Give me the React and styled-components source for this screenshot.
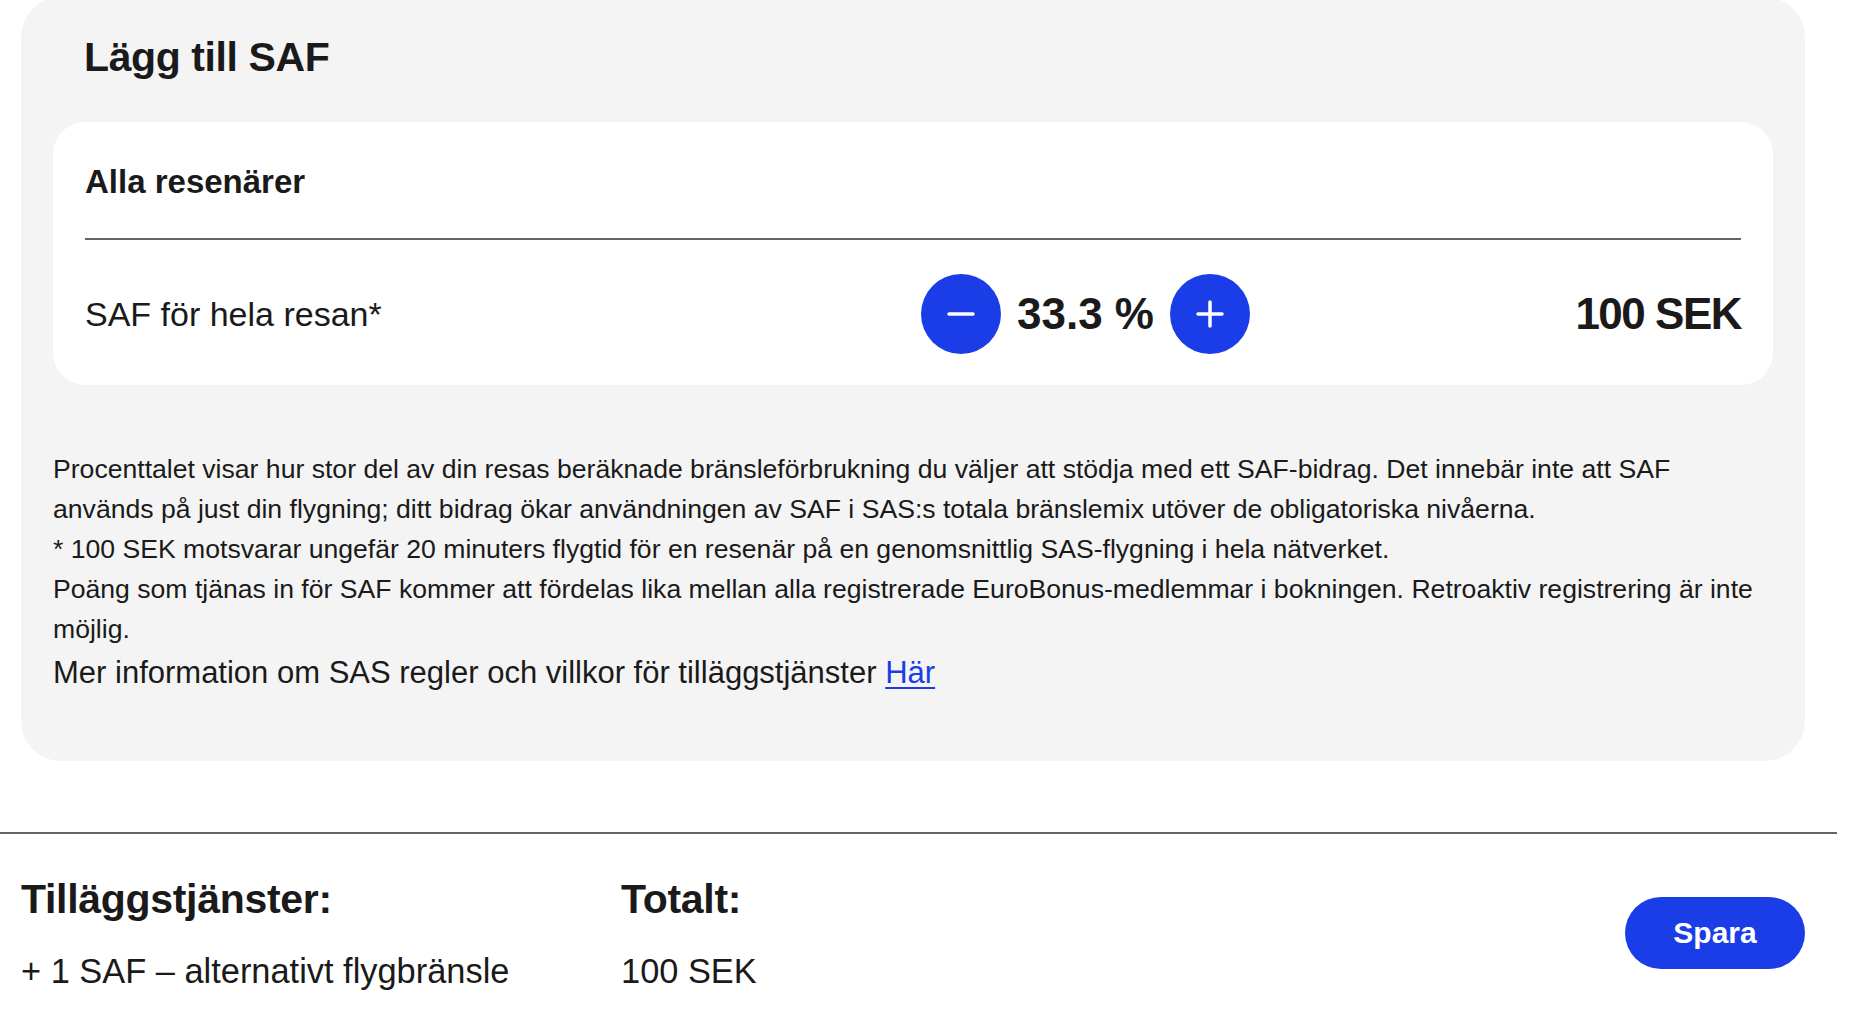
import React, { useState } from "react";
import styled, { createGlobalStyle } from "styled-components";

const GlobalStyle = createGlobalStyle`
  html, body {
    margin: 0;
    padding: 0;
    background: #ffffff;
    color: #1a1a1a;
    font-family: "Liberation Sans", Arial, sans-serif;
    overflow: hidden;
  }
  * { box-sizing: border-box; }
`;

const BLUE = "#1a3de8";

const Page = styled.div`
  width: 1862px;
  height: 1032px;
  overflow: hidden;
`;

const Panel = styled.section`
  margin: -3px 57px 0 21px;
  padding: 36px 32px 68px;
  background: #f4f4f4;
  border-radius: 40px;
`;

const Title = styled.h2`
  margin: 0 0 41px;
  padding-left: 31px;
  font-size: 41px;
  line-height: 48px;
  font-weight: 700;
  letter-spacing: -0.4px;
`;

const Card = styled.div`
  background: #ffffff;
  border-radius: 32px;
  padding: 40px 32px 31px;
`;

const CardHeader = styled.h3`
  margin: 0;
  padding-bottom: 36px;
  border-bottom: 2px solid #646464;
  font-size: 33px;
  line-height: 40px;
  font-weight: 700;
`;

const Row = styled.div`
  display: grid;
  grid-template-columns: 1fr 1fr;
  gap: 16px;
  align-items: center;
  margin-top: 34px;
`;

const Label = styled.span`
  font-size: 34px;
  line-height: 40px;
`;

const RightCell = styled.div`
  display: flex;
  align-items: center;
  justify-content: space-between;
`;

const Stepper = styled.div`
  display: flex;
  align-items: center;
  gap: 16px;
`;

const RoundButton = styled.button`
  width: 80px;
  height: 80px;
  border-radius: 50%;
  border: none;
  padding: 0;
  background: ${BLUE};
  display: flex;
  align-items: center;
  justify-content: center;
  cursor: pointer;
`;

const BigValue = styled.span`
  font-size: 44px;
  line-height: 48px;
  font-weight: 700;
  letter-spacing: ${(p) => (p.$tight ? "-1.5px" : "0")};
`;

const Info = styled.div`
  margin-top: 64px;
`;

const Paragraph = styled.p`
  margin: 0;
  font-size: 26.6px;
  line-height: 40px;
`;

const MoreInfo = styled.p`
  margin: 4px 0 0;
  font-size: 31px;
  line-height: 40px;
`;

const Link = styled.a`
  color: ${BLUE};
  text-decoration: underline;
  text-underline-offset: 4px;
  text-decoration-thickness: 2px;
`;

const Footer = styled.footer`
  margin: 71px 25px 0 0;
  border-top: 2px solid #646464;
  padding: 41px 32px 0 21px;
  display: flex;
  align-items: center;
`;

const Column = styled.div`
  width: ${(p) => p.$width || "auto"};
  display: flex;
  flex-direction: column;
  gap: 28px;
`;

const ColumnTitle = styled.h4`
  margin: 0;
  font-size: 41px;
  line-height: 48px;
  font-weight: 700;
  letter-spacing: -0.3px;
`;

const ColumnText = styled.span`
  font-size: 34.4px;
  line-height: 40px;
`;

const SaveButton = styled.button`
  margin-left: auto;
  width: 180px;
  height: 72px;
  border: none;
  border-radius: 36px;
  background: ${BLUE};
  color: #ffffff;
  font-family: "Liberation Sans", Arial, sans-serif;
  font-size: 30px;
  font-weight: 700;
  cursor: pointer;
`;

const Minus = () => (
  <svg width="30" height="30" viewBox="0 0 30 30">
    <line x1="3" y1="15" x2="27" y2="15" stroke="#fff" strokeWidth="3.5" strokeLinecap="round" />
  </svg>
);

const Plus = () => (
  <svg width="30" height="30" viewBox="0 0 30 30">
    <line x1="3" y1="15" x2="27" y2="15" stroke="#fff" strokeWidth="3.5" strokeLinecap="round" />
    <line x1="15" y1="3" x2="15" y2="27" stroke="#fff" strokeWidth="3.5" strokeLinecap="round" />
  </svg>
);

export default function App() {
  const [percent, setPercent] = useState(33.3);

  const step = (d) => setPercent((p) => Math.max(0, Math.round((p + d) * 10) / 10));

  return (
    <Page>
      <GlobalStyle />
      <Panel>
        <Title>Lägg till SAF</Title>
        <Card>
          <CardHeader>Alla resenärer</CardHeader>
          <Row>
            <Label>SAF för hela resan*</Label>
            <RightCell>
              <Stepper>
                <RoundButton aria-label="Minska" onClick={() => step(-33.3)}>
                  <Minus />
                </RoundButton>
                <BigValue>{percent} %</BigValue>
                <RoundButton aria-label="Öka" onClick={() => step(33.3)}>
                  <Plus />
                </RoundButton>
              </Stepper>
              <BigValue $tight>100 SEK</BigValue>
            </RightCell>
          </Row>
        </Card>
        <Info>
          <Paragraph>
            Procenttalet visar hur stor del av din resas beräknade bränsleförbrukning du väljer att
            stödja med ett SAF-bidrag. Det innebär inte att SAF
            <br />
            används på just din flygning; ditt bidrag ökar användningen av SAF i SAS:s totala
            bränslemix utöver de obligatoriska nivåerna.
          </Paragraph>
          <Paragraph>
            * 100 SEK motsvarar ungefär 20 minuters flygtid för en resenär på en genomsnittlig
            SAS-flygning i hela nätverket.
          </Paragraph>
          <Paragraph>
            Poäng som tjänas in för SAF kommer att fördelas lika mellan alla registrerade
            EuroBonus-medlemmar i bokningen. Retroaktiv registrering är inte möjlig.
          </Paragraph>
          <MoreInfo>
            Mer information om SAS regler och villkor för tilläggstjänster <Link href="#">Här</Link>
          </MoreInfo>
        </Info>
      </Panel>
      <Footer>
        <Column $width="600px">
          <ColumnTitle>Tilläggstjänster:</ColumnTitle>
          <ColumnText>+ 1 SAF – alternativt flygbränsle</ColumnText>
        </Column>
        <Column>
          <ColumnTitle>Totalt:</ColumnTitle>
          <ColumnText>100 SEK</ColumnText>
        </Column>
        <SaveButton>Spara</SaveButton>
      </Footer>
    </Page>
  );
}
